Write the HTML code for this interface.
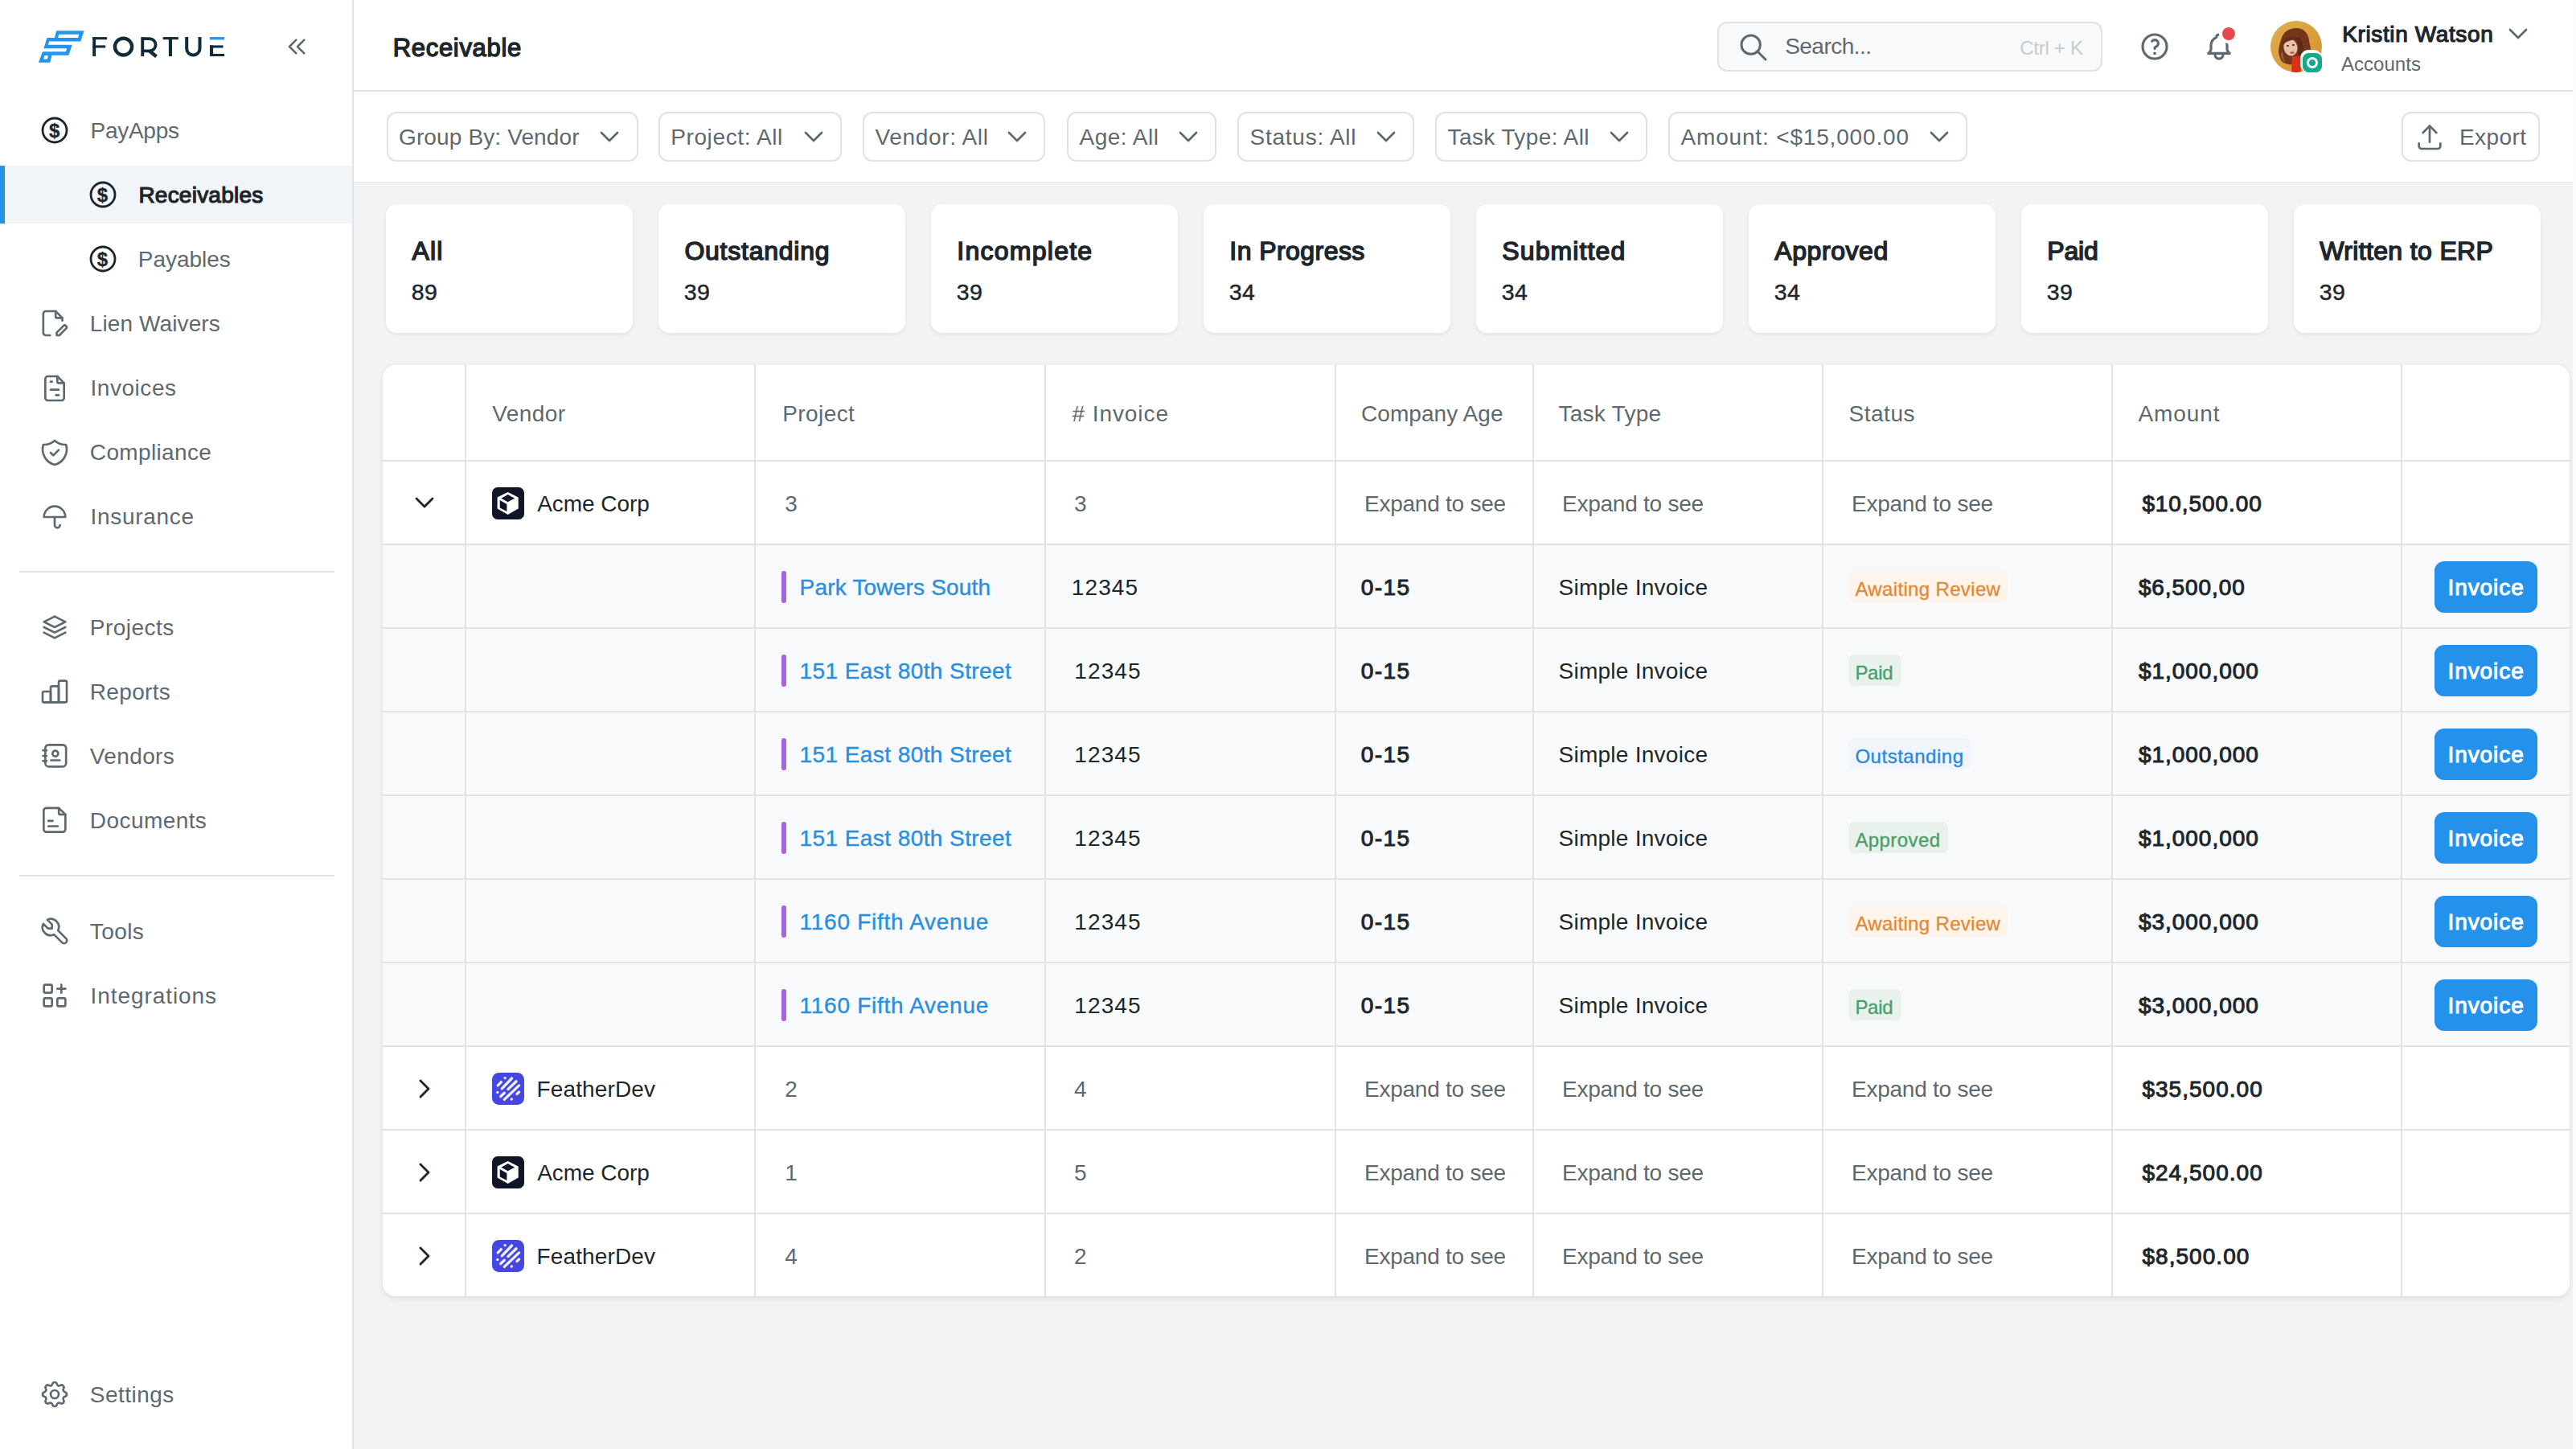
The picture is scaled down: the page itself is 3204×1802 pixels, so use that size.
<!DOCTYPE html><html><head><meta charset="utf-8"><style>
html,body{margin:0;padding:0;overflow:hidden;}
body{width:3204px;height:1802px;position:relative;overflow:hidden;background:#f1f3f5;font-family:"Liberation Sans", sans-serif;}
.t{position:absolute;white-space:nowrap;line-height:1;}
.r{position:absolute;box-sizing:border-box;}
.i{position:absolute;overflow:visible;}
</style></head><body>
<div class="r" style="left:0px;top:0px;width:438px;height:1802px;background:#ffffff;"></div>
<div class="r" style="left:438px;top:0px;width:2px;height:1802px;background:#e0e3e5;"></div>
<svg class="i" style="left:44px;top:34px;width:66px;height:48px" viewBox="0 0 66 48"><path fill="#2594ef" fill-rule="evenodd" d="M26.18 4.14 L60.64 4.14 L56.33 17.56 L17.23 17.56 L15.90 21.87 L45.73 21.87 L41.42 34.79 L20.54 34.79 L18.22 43.74 L3.98 43.74 L8.95 30.15 L37.96 30.15 L39.26 26.18 L10.27 26.18 L14.58 12.92 L23.86 12.92 Z M29.16 8.78 L54.34 8.78 L53.02 13.09 L28.16 13.09 Z M11.27 35.12 L15.90 35.12 L14.91 39.43 L10.27 39.43 Z"/></svg>
<svg class="i" style="left:0;top:0;width:300px;height:100px" viewBox="0 0 300 100"><g fill="#112b3b"><rect x="115.2" y="46.1" width="3.9" height="23.9"/><rect x="115.2" y="46.1" width="17.9" height="3.1"/><rect x="115.2" y="56.4" width="16" height="3.1"/><rect x="175.3" y="46.1" width="3.9" height="23.9"/><rect x="202.6" y="46.1" width="19.2" height="3.1"/><rect x="209.9" y="46.1" width="4.1" height="23.9"/><rect x="261" y="56.4" width="16.5" height="3.1"/><rect x="261" y="66.9" width="18.1" height="3.1"/><rect x="261" y="56.4" width="4.1" height="13.6"/></g><g fill="none" stroke="#112b3b" stroke-width="4"><ellipse cx="153.5" cy="58.1" rx="10.6" ry="10.4" stroke-width="4.4"/><path d="M177.2 48.1 H186 a7.6 7.6 0 0 1 0 15.2 H177.2" stroke-width="3.8"/><path d="M185.5 63 L194.5 70.2" stroke-width="4.4"/><path d="M232.2 46.1 V60.4 a8.15 8.15 0 0 0 16.3 0 V46.1"/></g><rect x="261" y="46.1" width="18.1" height="3.3" fill="#2594ef"/></svg>
<svg class="i" style="left:350.4px;top:38.3px;width:40px;height:40px;" viewBox="0 0 24 24" fill="none" stroke="#5e696f" stroke-width="1.5" stroke-linecap="round" stroke-linejoin="round"><path d="M11 7l-5 5l5 5"/><path d="M17 7l-5 5l5 5"/></svg>
<div class="r" style="left:0px;top:206px;width:438px;height:72px;background:#f1f5fa;"></div>
<div class="r" style="left:0px;top:206px;width:6px;height:72px;background:#2491ea;"></div>
<svg class="i" style="left:48.2px;top:141.8px;width:40px;height:40px;" viewBox="0 0 24 24" fill="none" stroke="#1d262c" stroke-width="1.7" stroke-linecap="round" stroke-linejoin="round"><circle cx="12" cy="12" r="9"/></svg>
<div class="t" style="left:60.9px;top:150.6px;font-size:24px;color:#1d262c;font-weight:700;-webkit-text-stroke:0.3px #1d262c;">$</div>
<div class="t" style="left:112.5px;top:148.8px;font-size:28px;color:#5e696f;letter-spacing:-0.27px;">PayApps</div>
<svg class="i" style="left:108.1px;top:221.8px;width:40px;height:40px;" viewBox="0 0 24 24" fill="none" stroke="#1d262c" stroke-width="1.7" stroke-linecap="round" stroke-linejoin="round"><circle cx="12" cy="12" r="9"/></svg>
<div class="t" style="left:120.8px;top:230.6px;font-size:24px;color:#1d262c;font-weight:700;-webkit-text-stroke:0.3px #1d262c;">$</div>
<div class="t" style="left:172.4px;top:228.8px;font-size:28px;color:#1d262c;letter-spacing:0.23px;-webkit-text-stroke:1.2px #1d262c;">Receivables</div>
<svg class="i" style="left:108.1px;top:301.7px;width:40px;height:40px;" viewBox="0 0 24 24" fill="none" stroke="#1d262c" stroke-width="1.7" stroke-linecap="round" stroke-linejoin="round"><circle cx="12" cy="12" r="9"/></svg>
<div class="t" style="left:120.8px;top:310.5px;font-size:24px;color:#1d262c;font-weight:700;-webkit-text-stroke:0.3px #1d262c;">$</div>
<div class="t" style="left:171.8px;top:308.5px;font-size:28px;color:#5e696f;letter-spacing:-0.03px;">Payables</div>
<svg class="i" style="left:48.0px;top:381.5px;width:40px;height:40px;" viewBox="0 0 24 24" fill="none" stroke="#5e696f" stroke-width="1.6" stroke-linecap="round" stroke-linejoin="round"><path d="M12.7 3v4a1 1 0 0 0 1 1h4"/><path d="M8.6 21h-3.1a2 2 0 0 1 -2 -2v-14a2 2 0 0 1 2 -2h7.2l5 5v2"/><path d="M13.5 21v-2l5 -5a1.414 1.414 0 0 1 2 2l-5 5h-2z"/></svg>
<div class="t" style="left:111.8px;top:389.3px;font-size:28px;color:#5e696f;letter-spacing:0.11px;">Lien Waivers</div>
<svg class="i" style="left:48.0px;top:462.5px;width:40px;height:40px;" viewBox="0 0 24 24" fill="none" stroke="#5e696f" stroke-width="1.6" stroke-linecap="round" stroke-linejoin="round"><path d="M14 3v4a1 1 0 0 0 1 1h4"/><path d="M17 21h-10a2 2 0 0 1 -2 -2v-14a2 2 0 0 1 2 -2h7l5 5v11a2 2 0 0 1 -2 2z"/><path d="M9 7l1 0"/><path d="M9 13l6 0"/><path d="M13 17l2 0"/></svg>
<div class="t" style="left:112.5px;top:469.3px;font-size:28px;color:#5e696f;letter-spacing:0.54px;">Invoices</div>
<svg class="i" style="left:48.0px;top:542.5px;width:40px;height:40px;" viewBox="0 0 24 24" fill="none" stroke="#5e696f" stroke-width="1.6" stroke-linecap="round" stroke-linejoin="round"><path d="M12 3a12 12 0 0 0 8.5 3a12 12 0 0 1 -8.5 15a12 12 0 0 1 -8.5 -15a12 12 0 0 0 8.5 -3"/><path d="M9 12l2 2l4 -4"/></svg>
<div class="t" style="left:111.8px;top:549.3px;font-size:28px;color:#5e696f;letter-spacing:0.36px;">Compliance</div>
<svg class="i" style="left:48.0px;top:622.5px;width:40px;height:40px;" viewBox="0 0 24 24" fill="none" stroke="#5e696f" stroke-width="1.6" stroke-linecap="round" stroke-linejoin="round"><path d="M4 12a8 8 0 0 1 16 0z"/><path d="M12 12v6a2 2 0 0 0 4 0"/></svg>
<div class="t" style="left:112.5px;top:629.3px;font-size:28px;color:#5e696f;letter-spacing:0.69px;">Insurance</div>
<svg class="i" style="left:48.0px;top:760.0px;width:40px;height:40px;" viewBox="0 0 24 24" fill="none" stroke="#5e696f" stroke-width="1.6" stroke-linecap="round" stroke-linejoin="round"><path d="M12 4l-8 4l8 4l8 -4l-8 -4"/><path d="M4 12l8 4l8 -4"/><path d="M4 16l8 4l8 -4"/></svg>
<div class="t" style="left:111.8px;top:766.8px;font-size:28px;color:#5e696f;letter-spacing:0.49px;">Projects</div>
<svg class="i" style="left:48.0px;top:840.0px;width:40px;height:40px;" viewBox="0 0 24 24" fill="none" stroke="#5e696f" stroke-width="1.6" stroke-linecap="round" stroke-linejoin="round"><path d="M3 13a1 1 0 0 1 1 -1h4a1 1 0 0 1 1 1v6a1 1 0 0 1 -1 1h-4a1 1 0 0 1 -1 -1z"/><path d="M9 9a1 1 0 0 1 1 -1h4a1 1 0 0 1 1 1v10a1 1 0 0 1 -1 1h-4a1 1 0 0 1 -1 -1z"/><path d="M15 5a1 1 0 0 1 1 -1h4a1 1 0 0 1 1 1v14a1 1 0 0 1 -1 1h-4a1 1 0 0 1 -1 -1z"/><path d="M4 20l14 0"/></svg>
<div class="t" style="left:111.8px;top:846.8px;font-size:28px;color:#5e696f;letter-spacing:0.33px;">Reports</div>
<svg class="i" style="left:48.0px;top:920.0px;width:40px;height:40px;" viewBox="0 0 24 24" fill="none" stroke="#5e696f" stroke-width="1.6" stroke-linecap="round" stroke-linejoin="round"><path d="M7.5 3.8h10.5a2.5 2.5 0 0 1 2.5 2.5v11.2a2.5 2.5 0 0 1 -2.5 2.5h-10.5a2.5 2.5 0 0 1 -2.5 -2.5v-11.2a2.5 2.5 0 0 1 2.5 -2.5z"/><path d="M9.3 15.3h6.5"/><circle cx="12.5" cy="10.3" r="2.1"/><path d="M3.3 7.9h2.6"/><path d="M3.3 12h2.6"/><path d="M3.3 15.8h2.6"/></svg>
<div class="t" style="left:111.8px;top:926.8px;font-size:28px;color:#5e696f;letter-spacing:0.38px;">Vendors</div>
<svg class="i" style="left:48.0px;top:1000.0px;width:40px;height:40px;" viewBox="0 0 24 24" fill="none" stroke="#5e696f" stroke-width="1.6" stroke-linecap="round" stroke-linejoin="round"><path d="M15.1 3v3.7a1 1 0 0 0 1 1h3.9"/><path d="M18 20.8h-12.2a2 2 0 0 1 -2 -2v-13.9a2 2 0 0 1 2 -2h9.3l4.9 4.8v11.1a2 2 0 0 1 -2 2z"/><path d="M7.3 16.5h7"/><path d="M7.3 12.5h3.2"/></svg>
<div class="t" style="left:111.8px;top:1006.8px;font-size:28px;color:#5e696f;letter-spacing:0.43px;">Documents</div>
<svg class="i" style="left:48.0px;top:1137.5px;width:40px;height:40px;" viewBox="0 0 24 24" fill="none" stroke="#5e696f" stroke-width="1.6" stroke-linecap="round" stroke-linejoin="round"><path d="M7 10h3v-3l-3.5 -3.5a6 6 0 0 1 8 8l6 6a2 2 0 0 1 -3 3l-6 -6a6 6 0 0 1 -8 -8l3.5 3.5"/></svg>
<div class="t" style="left:111.8px;top:1145.3px;font-size:28px;color:#5e696f;letter-spacing:0.4px;">Tools</div>
<svg class="i" style="left:48.0px;top:1217.5px;width:40px;height:40px;" viewBox="0 0 24 24" fill="none" stroke="#5e696f" stroke-width="1.6" stroke-linecap="round" stroke-linejoin="round"><path d="M5 4h4a1 1 0 0 1 1 1v4a1 1 0 0 1 -1 1h-4a1 1 0 0 1 -1 -1v-4a1 1 0 0 1 1 -1z"/><path d="M5 14h4a1 1 0 0 1 1 1v4a1 1 0 0 1 -1 1h-4a1 1 0 0 1 -1 -1v-4a1 1 0 0 1 1 -1z"/><path d="M15 14h4a1 1 0 0 1 1 1v4a1 1 0 0 1 -1 1h-4a1 1 0 0 1 -1 -1v-4a1 1 0 0 1 1 -1z"/><path d="M14 7l6 0"/><path d="M17 4l0 6"/></svg>
<div class="t" style="left:112.5px;top:1225.3px;font-size:28px;color:#5e696f;letter-spacing:0.93px;">Integrations</div>
<svg class="i" style="left:48.0px;top:1714.0px;width:40px;height:40px;" viewBox="0 0 24 24" fill="none" stroke="#5e696f" stroke-width="1.6" stroke-linecap="round" stroke-linejoin="round"><path d="M10.325 4.317c.426 -1.756 2.924 -1.756 3.35 0a1.724 1.724 0 0 0 2.573 1.066c1.543 -.94 3.31 .826 2.37 2.37a1.724 1.724 0 0 0 1.065 2.572c1.756 .426 1.756 2.924 0 3.35a1.724 1.724 0 0 0 -1.066 2.573c.94 1.543 -.826 3.31 -2.37 2.37a1.724 1.724 0 0 0 -2.572 1.065c-.426 1.756 -2.924 1.756 -3.35 0a1.724 1.724 0 0 0 -2.573 -1.066c-1.543 .94 -3.31 -.826 -2.37 -2.37a1.724 1.724 0 0 0 -1.065 -2.572c-1.756 -.426 -1.756 -2.924 0 -3.35a1.724 1.724 0 0 0 1.066 -2.573c-.94 -1.543 .826 -3.31 2.37 -2.37c1 .608 2.296 .07 2.572 -1.065z"/><path d="M9 12a3 3 0 1 0 6 0a3 3 0 0 0 -6 0"/></svg>
<div class="t" style="left:111.8px;top:1720.8px;font-size:28px;color:#5e696f;letter-spacing:0.47px;">Settings</div>
<div class="r" style="left:24px;top:710px;width:392px;height:2px;background:#e0e3e5;"></div>
<div class="r" style="left:24px;top:1088px;width:392px;height:2px;background:#e0e3e5;"></div>
<div class="r" style="left:440px;top:0px;width:2764px;height:112px;background:#ffffff;"></div>
<div class="r" style="left:440px;top:112px;width:2764px;height:2px;background:#e0e3e5;"></div>
<div class="t" style="left:488.7px;top:44.1px;font-size:31px;color:#1d262c;letter-spacing:0.69px;-webkit-text-stroke:1.4px #1d262c;">Receivable</div>
<div class="r" style="left:2136px;top:27px;width:479px;height:62px;background:#f8f9fa;border:2px solid #e0e3e5;border-radius:12px;"></div>
<svg class="i" style="left:2160.8px;top:38.9px;width:40px;height:40px" viewBox="0 0 24 24" fill="none" stroke="#5e696f" stroke-width="1.8" stroke-linecap="round"><circle cx="10" cy="10" r="7"/><path d="M21 21l-6 -6"/></svg>
<div class="t" style="left:2220.2px;top:44.4px;font-size:28px;color:#5e696f;letter-spacing:-0.54px;">Search...</div>
<div class="t" style="left:2512.3px;top:47.8px;font-size:24px;color:#c6cbd0;letter-spacing:-0.29px;">Ctrl + K</div>
<svg class="i" style="left:2660.0px;top:37.8px;width:40px;height:40px;" viewBox="0 0 24 24" fill="none" stroke="#5e696f" stroke-width="1.9" stroke-linecap="round" stroke-linejoin="round"><circle cx="12" cy="12" r="9"/><path d="M12 17l0 .01" stroke-width="2.3"/><path d="M12 13.5a1.5 1.5 0 0 1 1 -1.5a2.6 2.6 0 1 0 -3 -4"/></svg>
<svg class="i" style="left:2740.0px;top:38.0px;width:40px;height:40px;" viewBox="0 0 24 24" fill="none" stroke="#5e696f" stroke-width="1.9" stroke-linecap="round" stroke-linejoin="round"><path d="M10 5a2 2 0 1 1 4 0a7 7 0 0 1 4 6v3a4 4 0 0 0 2 3h-16a4 4 0 0 0 2 -3v-3a7 7 0 0 1 4 -6"/><path d="M9 17v1a3 3 0 0 0 6 0v-1"/></svg>
<div class="r" style="left:2760px;top:30px;width:24px;height:24px;border-radius:50%;background:#fff;"></div>
<div class="r" style="left:2764px;top:34px;width:16px;height:16px;border-radius:50%;background:#e5484d;"></div>
<svg class="i" style="left:2824px;top:26px;width:64px;height:64px" viewBox="0 0 64 64"><defs><clipPath id="av"><circle cx="32" cy="32" r="32"/></clipPath><linearGradient id="ag" x1="0" y1="0" x2="1" y2="1"><stop offset="0" stop-color="#deb04e"/><stop offset="1" stop-color="#d58f2e"/></linearGradient></defs><g clip-path="url(#av)"><rect width="64" height="64" fill="url(#ag)"/><path d="M12 46 C9 40 10 32 13 24 C15 14 23 9 32 9 C41 9 47 15 48 24 C49 31 51 36 50 41 C48 45 44 46 40 47 L36 50 C33 53 28 55 22 54 C17 53 13 51 12 46 Z" fill="#74351b"/><path d="M13 40 C12 44 14 49 19 52 C16 47 15 43 16 38 Z" fill="#9a5a34"/><path d="M44 36 C47 38 49 40 48 43 C46 41 44 40 43 39 Z" fill="#9a5a34"/><ellipse cx="25" cy="33" rx="8.5" ry="10.5" fill="#e8c3ac" transform="rotate(-12 25 33)"/><path d="M15 28 C16 20 25 17 33 21 C34 24 30 23 26 24 C21 25 18 27 15 30 Z" fill="#6a2e17"/><path d="M31 22 C35 26 36 34 34 42 L39 44 C42 36 41 26 36 20 Z" fill="#5e2815"/><ellipse cx="21.5" cy="31" rx="1.6" ry="0.9" fill="#4a2a20"/><ellipse cx="28.5" cy="30" rx="1.6" ry="0.9" fill="#4a2a20"/><ellipse cx="27" cy="39.5" rx="2.8" ry="1.3" fill="#d8473f"/><path d="M27 44 L37 44 L38 64 L26 64 Z" fill="#dc2f1a"/></g></svg>
<div class="r" style="left:2860.5px;top:62.3px;width:27.6px;height:27.6px;border-radius:10px;background:#fff;"></div>
<div class="r" style="left:2864.2px;top:66px;width:23.6px;height:23.8px;border-radius:7.5px;background:#17a98b;"></div>
<div class="r" style="left:2869px;top:71px;width:14px;height:14px;border-radius:50%;border:3px solid #fff;"></div>
<div class="t" style="left:2913.2px;top:28.9px;font-size:28px;color:#1d262c;letter-spacing:0.62px;-webkit-text-stroke:1.2px #1d262c;">Kristin Watson</div>
<div class="t" style="left:2911.9px;top:68.0px;font-size:24px;color:#5e696f;letter-spacing:0.04px;">Accounts</div>
<svg class="i" style="left:3112.0px;top:21.7px;width:40px;height:40px;" viewBox="0 0 24 24" fill="none" stroke="#5e696f" stroke-width="1.6" stroke-linecap="round" stroke-linejoin="round"><path d="M6 9l6 6l6 -6"/></svg>
<div class="r" style="left:440px;top:114px;width:2764px;height:112px;background:#ffffff;"></div>
<div class="r" style="left:480.5px;top:138.5px;width:313px;height:62.5px;background:#ffffff;border:2px solid #e0e3e5;border-radius:12px;"></div>
<div class="t" style="left:496.0px;top:157.4px;font-size:28px;color:#5e696f;letter-spacing:0.13px;">Group By: Vendor</div>
<svg class="i" style="left:738.0px;top:149.8px;width:40px;height:40px;" viewBox="0 0 24 24" fill="none" stroke="#5e696f" stroke-width="1.6" stroke-linecap="round" stroke-linejoin="round"><path d="M6 9l6 6l6 -6"/></svg>
<div class="r" style="left:818.7px;top:138.5px;width:228.5px;height:62.5px;background:#ffffff;border:2px solid #e0e3e5;border-radius:12px;"></div>
<div class="t" style="left:834.2px;top:157.4px;font-size:28px;color:#5e696f;letter-spacing:0.62px;">Project: All</div>
<svg class="i" style="left:991.7px;top:149.8px;width:40px;height:40px;" viewBox="0 0 24 24" fill="none" stroke="#5e696f" stroke-width="1.6" stroke-linecap="round" stroke-linejoin="round"><path d="M6 9l6 6l6 -6"/></svg>
<div class="r" style="left:1073px;top:138.5px;width:227px;height:62.5px;background:#ffffff;border:2px solid #e0e3e5;border-radius:12px;"></div>
<div class="t" style="left:1088.5px;top:157.4px;font-size:28px;color:#5e696f;letter-spacing:0.66px;">Vendor: All</div>
<svg class="i" style="left:1244.5px;top:149.8px;width:40px;height:40px;" viewBox="0 0 24 24" fill="none" stroke="#5e696f" stroke-width="1.6" stroke-linecap="round" stroke-linejoin="round"><path d="M6 9l6 6l6 -6"/></svg>
<div class="r" style="left:1327px;top:138.5px;width:186px;height:62.5px;background:#ffffff;border:2px solid #e0e3e5;border-radius:12px;"></div>
<div class="t" style="left:1342.5px;top:157.4px;font-size:28px;color:#5e696f;letter-spacing:0.5px;">Age: All</div>
<svg class="i" style="left:1457.5px;top:149.8px;width:40px;height:40px;" viewBox="0 0 24 24" fill="none" stroke="#5e696f" stroke-width="1.6" stroke-linecap="round" stroke-linejoin="round"><path d="M6 9l6 6l6 -6"/></svg>
<div class="r" style="left:1539px;top:138.5px;width:220px;height:62.5px;background:#ffffff;border:2px solid #e0e3e5;border-radius:12px;"></div>
<div class="t" style="left:1554.5px;top:157.4px;font-size:28px;color:#5e696f;letter-spacing:0.75px;">Status: All</div>
<svg class="i" style="left:1703.5px;top:149.8px;width:40px;height:40px;" viewBox="0 0 24 24" fill="none" stroke="#5e696f" stroke-width="1.6" stroke-linecap="round" stroke-linejoin="round"><path d="M6 9l6 6l6 -6"/></svg>
<div class="r" style="left:1785px;top:138.5px;width:264px;height:62.5px;background:#ffffff;border:2px solid #e0e3e5;border-radius:12px;"></div>
<div class="t" style="left:1800.5px;top:157.4px;font-size:28px;color:#5e696f;letter-spacing:0.41px;">Task Type: All</div>
<svg class="i" style="left:1993.5px;top:149.8px;width:40px;height:40px;" viewBox="0 0 24 24" fill="none" stroke="#5e696f" stroke-width="1.6" stroke-linecap="round" stroke-linejoin="round"><path d="M6 9l6 6l6 -6"/></svg>
<div class="r" style="left:2075px;top:138.5px;width:372px;height:62.5px;background:#ffffff;border:2px solid #e0e3e5;border-radius:12px;"></div>
<div class="t" style="left:2090.5px;top:157.4px;font-size:28px;color:#5e696f;letter-spacing:0.83px;">Amount: &lt;$15,000.00</div>
<svg class="i" style="left:2391.5px;top:149.8px;width:40px;height:40px;" viewBox="0 0 24 24" fill="none" stroke="#5e696f" stroke-width="1.6" stroke-linecap="round" stroke-linejoin="round"><path d="M6 9l6 6l6 -6"/></svg>
<div class="r" style="left:2987px;top:138.5px;width:172px;height:62.5px;background:#ffffff;border:2px solid #e0e3e5;border-radius:12px;"></div>
<svg class="i" style="left:3001.5px;top:149.5px;width:40px;height:40px;" viewBox="0 0 24 24" fill="none" stroke="#5e696f" stroke-width="1.6" stroke-linecap="round" stroke-linejoin="round"><path d="M4 17v2a2 2 0 0 0 2 2h12a2 2 0 0 0 2 -2v-2"/><path d="M7 9l5 -5l5 5"/><path d="M12 4l0 12"/></svg>
<div class="t" style="left:3059.0px;top:157.4px;font-size:28px;color:#5e696f;letter-spacing:0.42px;">Export</div>
<div class="r" style="left:480px;top:254px;width:307px;height:160px;background:#ffffff;border-radius:14px;box-shadow:0 2px 5px rgba(16,24,40,0.07);"></div>
<div class="t" style="left:512.4px;top:296.2px;font-size:32px;color:#1d262c;letter-spacing:1.25px;-webkit-text-stroke:1.5px #1d262c;">All</div>
<div class="t" style="left:511.8px;top:348.7px;font-size:28.5px;color:#1d262c;letter-spacing:0.35px;-webkit-text-stroke:0.45px #1d262c;">89</div>
<div class="r" style="left:819px;top:254px;width:307px;height:160px;background:#ffffff;border-radius:14px;box-shadow:0 2px 5px rgba(16,24,40,0.07);"></div>
<div class="t" style="left:851.4px;top:296.2px;font-size:32px;color:#1d262c;letter-spacing:0.76px;-webkit-text-stroke:1.5px #1d262c;">Outstanding</div>
<div class="t" style="left:850.8px;top:348.7px;font-size:28.5px;color:#1d262c;letter-spacing:0.35px;-webkit-text-stroke:0.45px #1d262c;">39</div>
<div class="r" style="left:1158px;top:254px;width:307px;height:160px;background:#ffffff;border-radius:14px;box-shadow:0 2px 5px rgba(16,24,40,0.07);"></div>
<div class="t" style="left:1190.3px;top:296.2px;font-size:32px;color:#1d262c;letter-spacing:1.26px;-webkit-text-stroke:1.5px #1d262c;">Incomplete</div>
<div class="t" style="left:1189.8px;top:348.7px;font-size:28.5px;color:#1d262c;letter-spacing:0.35px;-webkit-text-stroke:0.45px #1d262c;">39</div>
<div class="r" style="left:1497px;top:254px;width:307px;height:160px;background:#ffffff;border-radius:14px;box-shadow:0 2px 5px rgba(16,24,40,0.07);"></div>
<div class="t" style="left:1529.3px;top:296.2px;font-size:32px;color:#1d262c;letter-spacing:0.44px;-webkit-text-stroke:1.5px #1d262c;">In Progress</div>
<div class="t" style="left:1528.8px;top:348.7px;font-size:28.5px;color:#1d262c;letter-spacing:0.35px;-webkit-text-stroke:0.45px #1d262c;">34</div>
<div class="r" style="left:1836px;top:254px;width:307px;height:160px;background:#ffffff;border-radius:14px;box-shadow:0 2px 5px rgba(16,24,40,0.07);"></div>
<div class="t" style="left:1868.3px;top:296.2px;font-size:32px;color:#1d262c;letter-spacing:1.11px;-webkit-text-stroke:1.5px #1d262c;">Submitted</div>
<div class="t" style="left:1867.8px;top:348.7px;font-size:28.5px;color:#1d262c;letter-spacing:0.35px;-webkit-text-stroke:0.45px #1d262c;">34</div>
<div class="r" style="left:2175px;top:254px;width:307px;height:160px;background:#ffffff;border-radius:14px;box-shadow:0 2px 5px rgba(16,24,40,0.07);"></div>
<div class="t" style="left:2207.3px;top:296.2px;font-size:32px;color:#1d262c;letter-spacing:0.57px;-webkit-text-stroke:1.5px #1d262c;">Approved</div>
<div class="t" style="left:2206.8px;top:348.7px;font-size:28.5px;color:#1d262c;letter-spacing:0.35px;-webkit-text-stroke:0.45px #1d262c;">34</div>
<div class="r" style="left:2514px;top:254px;width:307px;height:160px;background:#ffffff;border-radius:14px;box-shadow:0 2px 5px rgba(16,24,40,0.07);"></div>
<div class="t" style="left:2546.3px;top:296.2px;font-size:32px;color:#1d262c;letter-spacing:-0.17px;-webkit-text-stroke:1.5px #1d262c;">Paid</div>
<div class="t" style="left:2545.8px;top:348.7px;font-size:28.5px;color:#1d262c;letter-spacing:0.35px;-webkit-text-stroke:0.45px #1d262c;">39</div>
<div class="r" style="left:2853px;top:254px;width:307px;height:160px;background:#ffffff;border-radius:14px;box-shadow:0 2px 5px rgba(16,24,40,0.07);"></div>
<div class="t" style="left:2885.3px;top:296.2px;font-size:32px;color:#1d262c;letter-spacing:0.35px;-webkit-text-stroke:1.5px #1d262c;">Written to ERP</div>
<div class="t" style="left:2884.8px;top:348.7px;font-size:28.5px;color:#1d262c;letter-spacing:0.35px;-webkit-text-stroke:0.45px #1d262c;">39</div>
<div class="r" style="left:476px;top:454px;width:2720px;height:1158px;background:#fff;border-radius:16px;box-shadow:0 3px 8px rgba(16,24,40,0.08), 0 0 2px rgba(16,24,40,0.05);overflow:hidden;">
<div class="r" style="left:0;top:224px;width:2720px;height:102px;background:#f8f9fa;"></div>
<div class="r" style="left:0;top:328px;width:2720px;height:102px;background:#f8f9fa;"></div>
<div class="r" style="left:0;top:432px;width:2720px;height:102px;background:#f8f9fa;"></div>
<div class="r" style="left:0;top:536px;width:2720px;height:102px;background:#f8f9fa;"></div>
<div class="r" style="left:0;top:640px;width:2720px;height:102px;background:#f8f9fa;"></div>
<div class="r" style="left:0;top:744px;width:2720px;height:102px;background:#f8f9fa;"></div>
</div>
<div class="r" style="left:476px;top:572px;width:2720px;height:2px;background:#e0e3e5;"></div>
<div class="r" style="left:476px;top:676px;width:2720px;height:2px;background:#e0e3e5;"></div>
<div class="r" style="left:476px;top:780px;width:2720px;height:2px;background:#e0e3e5;"></div>
<div class="r" style="left:476px;top:884px;width:2720px;height:2px;background:#e0e3e5;"></div>
<div class="r" style="left:476px;top:988px;width:2720px;height:2px;background:#e0e3e5;"></div>
<div class="r" style="left:476px;top:1092px;width:2720px;height:2px;background:#e0e3e5;"></div>
<div class="r" style="left:476px;top:1196px;width:2720px;height:2px;background:#e0e3e5;"></div>
<div class="r" style="left:476px;top:1300px;width:2720px;height:2px;background:#e0e3e5;"></div>
<div class="r" style="left:476px;top:1404px;width:2720px;height:2px;background:#e0e3e5;"></div>
<div class="r" style="left:476px;top:1508px;width:2720px;height:2px;background:#e0e3e5;"></div>
<div class="r" style="left:578px;top:454px;width:2px;height:1158px;background:#e0e3e5;"></div>
<div class="r" style="left:938px;top:454px;width:2px;height:1158px;background:#e0e3e5;"></div>
<div class="r" style="left:1299px;top:454px;width:2px;height:1158px;background:#e0e3e5;"></div>
<div class="r" style="left:1660px;top:454px;width:2px;height:1158px;background:#e0e3e5;"></div>
<div class="r" style="left:1906px;top:454px;width:2px;height:1158px;background:#e0e3e5;"></div>
<div class="r" style="left:2266px;top:454px;width:2px;height:1158px;background:#e0e3e5;"></div>
<div class="r" style="left:2626px;top:454px;width:2px;height:1158px;background:#e0e3e5;"></div>
<div class="r" style="left:2986px;top:454px;width:2px;height:1158px;background:#e0e3e5;"></div>
<div class="t" style="left:612.3px;top:500.8px;font-size:28px;color:#5e696f;letter-spacing:0.4px;">Vendor</div>
<div class="t" style="left:973.3px;top:500.8px;font-size:28px;color:#5e696f;letter-spacing:0.4px;">Project</div>
<div class="t" style="left:1333.5px;top:500.8px;font-size:28px;color:#5e696f;letter-spacing:0.93px;"># Invoice</div>
<div class="t" style="left:1693.0px;top:500.8px;font-size:28px;color:#5e696f;letter-spacing:0.06px;">Company Age</div>
<div class="t" style="left:1938.5px;top:500.8px;font-size:28px;color:#5e696f;letter-spacing:0.25px;">Task Type</div>
<div class="t" style="left:2299.5px;top:500.8px;font-size:28px;color:#5e696f;letter-spacing:0.52px;">Status</div>
<div class="t" style="left:2659.5px;top:500.8px;font-size:28px;color:#5e696f;letter-spacing:0.9px;">Amount</div>
<svg class="i" style="left:508.0px;top:605.0px;width:40px;height:40px;" viewBox="0 0 24 24" fill="none" stroke="#1d262c" stroke-width="1.7" stroke-linecap="round" stroke-linejoin="round"><path d="M6 9l6 6l6 -6"/></svg>
<svg class="i" style="left:612px;top:606px;width:40px;height:40px" viewBox="0 0 40 40"><rect width="40" height="40" rx="7" fill="#0f1726"/><path fill="#fff" fill-rule="evenodd" d="M19.66 6.0 L32.7 12.6 L32.7 26.5 L19.66 33.9 L6.6 26.5 L6.6 12.6 Z M11.4 13.7 L19.66 9.1 L28.1 13.7 L19.66 18.2 Z M9.7 16.1 L18.4 20.9 L18.4 30.0 L9.7 25.5 Z"/></svg>
<div class="t" style="left:668.2px;top:612.8px;font-size:28px;color:#1d262c;letter-spacing:-0.05px;">Acme Corp</div>
<div class="t" style="left:976.3px;top:612.8px;font-size:28px;color:#5e696f;">3</div>
<div class="t" style="left:1336.0px;top:612.8px;font-size:28px;color:#5e696f;">3</div>
<div class="t" style="left:1697.0px;top:612.8px;font-size:28px;color:#5e696f;letter-spacing:-0.25px;">Expand to see</div>
<div class="t" style="left:1943.0px;top:612.8px;font-size:28px;color:#5e696f;letter-spacing:-0.25px;">Expand to see</div>
<div class="t" style="left:2303.0px;top:612.8px;font-size:28px;color:#5e696f;letter-spacing:-0.25px;">Expand to see</div>
<div class="t" style="left:2664.4px;top:612.8px;font-size:28px;color:#1d262c;letter-spacing:0.91px;-webkit-text-stroke:1.0px #1d262c;">$10,500.00</div>
<div class="r" style="left:972px;top:709.5px;width:6px;height:40px;border-radius:3px;background:#a463e6;"></div>
<div class="t" style="left:994.6px;top:716.8px;font-size:28px;color:#2b8fe0;letter-spacing:0.19px;-webkit-text-stroke:0.4px #2b8fe0;">Park Towers South</div>
<div class="t" style="left:1332.7px;top:716.8px;font-size:28px;color:#1d262c;letter-spacing:1.15px;">12345</div>
<div class="t" style="left:1692.7px;top:716.8px;font-size:28px;color:#1d262c;letter-spacing:1.47px;-webkit-text-stroke:1.0px #1d262c;">0-15</div>
<div class="t" style="left:1938.5px;top:716.8px;font-size:28px;color:#1d262c;letter-spacing:0.26px;">Simple Invoice</div>
<div class="r" style="left:2299.4px;top:710px;width:197.4px;height:39px;background:#fdf4eb;border-radius:8px;"></div>
<div class="t" style="left:2307.4px;top:720.9px;font-size:24px;color:#e08b36;letter-spacing:0.35px;-webkit-text-stroke:0.35px #e08b36;">Awaiting Review</div>
<div class="t" style="left:2659.9px;top:716.8px;font-size:28px;color:#1d262c;letter-spacing:0.91px;-webkit-text-stroke:1.0px #1d262c;">$6,500,00</div>
<div class="r" style="left:3028px;top:698px;width:128px;height:64px;background:#2491ea;border-radius:12px;"></div>
<div class="t" style="left:3044.5px;top:716.8px;font-size:28px;color:#ffffff;letter-spacing:0.92px;-webkit-text-stroke:1.0px #ffffff;">Invoice</div>
<div class="r" style="left:972px;top:813.5px;width:6px;height:40px;border-radius:3px;background:#a463e6;"></div>
<div class="t" style="left:994.6px;top:820.8px;font-size:28px;color:#2b8fe0;letter-spacing:0.42px;-webkit-text-stroke:0.4px #2b8fe0;">151 East 80th Street</div>
<div class="t" style="left:1336.2px;top:820.8px;font-size:28px;color:#1d262c;letter-spacing:1.15px;">12345</div>
<div class="t" style="left:1692.7px;top:820.8px;font-size:28px;color:#1d262c;letter-spacing:1.47px;-webkit-text-stroke:1.0px #1d262c;">0-15</div>
<div class="t" style="left:1938.5px;top:820.8px;font-size:28px;color:#1d262c;letter-spacing:0.26px;">Simple Invoice</div>
<div class="r" style="left:2299.4px;top:814px;width:65.7px;height:39px;background:#e8f1eb;border-radius:8px;"></div>
<div class="t" style="left:2307.4px;top:824.9px;font-size:24px;color:#4a9e6b;letter-spacing:-0.28px;-webkit-text-stroke:0.35px #4a9e6b;">Paid</div>
<div class="t" style="left:2659.9px;top:820.8px;font-size:28px;color:#1d262c;letter-spacing:0.98px;-webkit-text-stroke:1.0px #1d262c;">$1,000,000</div>
<div class="r" style="left:3028px;top:802px;width:128px;height:64px;background:#2491ea;border-radius:12px;"></div>
<div class="t" style="left:3044.5px;top:820.8px;font-size:28px;color:#ffffff;letter-spacing:0.92px;-webkit-text-stroke:1.0px #ffffff;">Invoice</div>
<div class="r" style="left:972px;top:917.5px;width:6px;height:40px;border-radius:3px;background:#a463e6;"></div>
<div class="t" style="left:994.6px;top:924.8px;font-size:28px;color:#2b8fe0;letter-spacing:0.42px;-webkit-text-stroke:0.4px #2b8fe0;">151 East 80th Street</div>
<div class="t" style="left:1336.2px;top:924.8px;font-size:28px;color:#1d262c;letter-spacing:1.15px;">12345</div>
<div class="t" style="left:1692.7px;top:924.8px;font-size:28px;color:#1d262c;letter-spacing:1.47px;-webkit-text-stroke:1.0px #1d262c;">0-15</div>
<div class="t" style="left:1938.5px;top:924.8px;font-size:28px;color:#1d262c;letter-spacing:0.26px;">Simple Invoice</div>
<div class="r" style="left:2299.4px;top:918px;width:152px;height:39px;background:#f0f5fc;border-radius:8px;"></div>
<div class="t" style="left:2307.4px;top:928.9px;font-size:24px;color:#2a88da;letter-spacing:0.52px;-webkit-text-stroke:0.35px #2a88da;">Outstanding</div>
<div class="t" style="left:2659.9px;top:924.8px;font-size:28px;color:#1d262c;letter-spacing:0.98px;-webkit-text-stroke:1.0px #1d262c;">$1,000,000</div>
<div class="r" style="left:3028px;top:906px;width:128px;height:64px;background:#2491ea;border-radius:12px;"></div>
<div class="t" style="left:3044.5px;top:924.8px;font-size:28px;color:#ffffff;letter-spacing:0.92px;-webkit-text-stroke:1.0px #ffffff;">Invoice</div>
<div class="r" style="left:972px;top:1021.5px;width:6px;height:40px;border-radius:3px;background:#a463e6;"></div>
<div class="t" style="left:994.6px;top:1028.8px;font-size:28px;color:#2b8fe0;letter-spacing:0.42px;-webkit-text-stroke:0.4px #2b8fe0;">151 East 80th Street</div>
<div class="t" style="left:1336.2px;top:1028.8px;font-size:28px;color:#1d262c;letter-spacing:1.15px;">12345</div>
<div class="t" style="left:1692.7px;top:1028.8px;font-size:28px;color:#1d262c;letter-spacing:1.47px;-webkit-text-stroke:1.0px #1d262c;">0-15</div>
<div class="t" style="left:1938.5px;top:1028.8px;font-size:28px;color:#1d262c;letter-spacing:0.26px;">Simple Invoice</div>
<div class="r" style="left:2299.4px;top:1022px;width:124px;height:39px;background:#e8f1eb;border-radius:8px;"></div>
<div class="t" style="left:2307.4px;top:1032.9px;font-size:24px;color:#4a9e6b;letter-spacing:0.42px;-webkit-text-stroke:0.35px #4a9e6b;">Approved</div>
<div class="t" style="left:2659.9px;top:1028.8px;font-size:28px;color:#1d262c;letter-spacing:0.98px;-webkit-text-stroke:1.0px #1d262c;">$1,000,000</div>
<div class="r" style="left:3028px;top:1010px;width:128px;height:64px;background:#2491ea;border-radius:12px;"></div>
<div class="t" style="left:3044.5px;top:1028.8px;font-size:28px;color:#ffffff;letter-spacing:0.92px;-webkit-text-stroke:1.0px #ffffff;">Invoice</div>
<div class="r" style="left:972px;top:1125.5px;width:6px;height:40px;border-radius:3px;background:#a463e6;"></div>
<div class="t" style="left:994.6px;top:1132.8px;font-size:28px;color:#2b8fe0;letter-spacing:0.72px;-webkit-text-stroke:0.4px #2b8fe0;">1160 Fifth Avenue</div>
<div class="t" style="left:1336.2px;top:1132.8px;font-size:28px;color:#1d262c;letter-spacing:1.15px;">12345</div>
<div class="t" style="left:1692.7px;top:1132.8px;font-size:28px;color:#1d262c;letter-spacing:1.47px;-webkit-text-stroke:1.0px #1d262c;">0-15</div>
<div class="t" style="left:1938.5px;top:1132.8px;font-size:28px;color:#1d262c;letter-spacing:0.26px;">Simple Invoice</div>
<div class="r" style="left:2299.4px;top:1126px;width:197.4px;height:39px;background:#fdf4eb;border-radius:8px;"></div>
<div class="t" style="left:2307.4px;top:1136.9px;font-size:24px;color:#e08b36;letter-spacing:0.35px;-webkit-text-stroke:0.35px #e08b36;">Awaiting Review</div>
<div class="t" style="left:2659.9px;top:1132.8px;font-size:28px;color:#1d262c;letter-spacing:0.98px;-webkit-text-stroke:1.0px #1d262c;">$3,000,000</div>
<div class="r" style="left:3028px;top:1114px;width:128px;height:64px;background:#2491ea;border-radius:12px;"></div>
<div class="t" style="left:3044.5px;top:1132.8px;font-size:28px;color:#ffffff;letter-spacing:0.92px;-webkit-text-stroke:1.0px #ffffff;">Invoice</div>
<div class="r" style="left:972px;top:1229.5px;width:6px;height:40px;border-radius:3px;background:#a463e6;"></div>
<div class="t" style="left:994.6px;top:1236.8px;font-size:28px;color:#2b8fe0;letter-spacing:0.72px;-webkit-text-stroke:0.4px #2b8fe0;">1160 Fifth Avenue</div>
<div class="t" style="left:1336.2px;top:1236.8px;font-size:28px;color:#1d262c;letter-spacing:1.15px;">12345</div>
<div class="t" style="left:1692.7px;top:1236.8px;font-size:28px;color:#1d262c;letter-spacing:1.47px;-webkit-text-stroke:1.0px #1d262c;">0-15</div>
<div class="t" style="left:1938.5px;top:1236.8px;font-size:28px;color:#1d262c;letter-spacing:0.26px;">Simple Invoice</div>
<div class="r" style="left:2299.4px;top:1230px;width:65.7px;height:39px;background:#e8f1eb;border-radius:8px;"></div>
<div class="t" style="left:2307.4px;top:1240.9px;font-size:24px;color:#4a9e6b;letter-spacing:-0.28px;-webkit-text-stroke:0.35px #4a9e6b;">Paid</div>
<div class="t" style="left:2659.9px;top:1236.8px;font-size:28px;color:#1d262c;letter-spacing:0.98px;-webkit-text-stroke:1.0px #1d262c;">$3,000,000</div>
<div class="r" style="left:3028px;top:1218px;width:128px;height:64px;background:#2491ea;border-radius:12px;"></div>
<div class="t" style="left:3044.5px;top:1236.8px;font-size:28px;color:#ffffff;letter-spacing:0.92px;-webkit-text-stroke:1.0px #ffffff;">Invoice</div>
<svg class="i" style="left:507.8px;top:1333.8px;width:40px;height:40px;" viewBox="0 0 24 24" fill="none" stroke="#1d262c" stroke-width="1.7" stroke-linecap="round" stroke-linejoin="round"><path d="M9 6l6 6l-6 6"/></svg>
<svg class="i" style="left:612px;top:1334px;width:40px;height:40px" viewBox="0 0 40 40"><rect width="40" height="40" rx="8.5" fill="#4646e1"/><g stroke="#eef0ff" stroke-width="3.3" stroke-linecap="round"><path d="M7.2 15.9 L11.4 11.6"/><path d="M12.2 19.8 L24.6 7"/><path d="M20 20.5 L30.1 10.8"/><path d="M15.3 33.4 L33.6 15.9"/><path d="M10.7 29.5 L15.3 25.2"/><path d="M30.9 26.4 L33.6 24"/></g><g fill="#eef0ff"><circle cx="16.1" cy="6.6" r="1.7"/><circle cx="6.8" cy="24.4" r="1.7"/><circle cx="24.3" cy="33" r="1.7"/></g></svg>
<div class="t" style="left:667.5px;top:1340.8px;font-size:28px;color:#1d262c;letter-spacing:0.13px;">FeatherDev</div>
<div class="t" style="left:976.3px;top:1340.8px;font-size:28px;color:#5e696f;">2</div>
<div class="t" style="left:1336.0px;top:1340.8px;font-size:28px;color:#5e696f;">4</div>
<div class="t" style="left:1697.0px;top:1340.8px;font-size:28px;color:#5e696f;letter-spacing:-0.25px;">Expand to see</div>
<div class="t" style="left:1943.0px;top:1340.8px;font-size:28px;color:#5e696f;letter-spacing:-0.25px;">Expand to see</div>
<div class="t" style="left:2303.0px;top:1340.8px;font-size:28px;color:#5e696f;letter-spacing:-0.25px;">Expand to see</div>
<div class="t" style="left:2664.4px;top:1340.8px;font-size:28px;color:#1d262c;letter-spacing:1.03px;-webkit-text-stroke:1.0px #1d262c;">$35,500.00</div>
<svg class="i" style="left:507.8px;top:1437.8px;width:40px;height:40px;" viewBox="0 0 24 24" fill="none" stroke="#1d262c" stroke-width="1.7" stroke-linecap="round" stroke-linejoin="round"><path d="M9 6l6 6l-6 6"/></svg>
<svg class="i" style="left:612px;top:1438px;width:40px;height:40px" viewBox="0 0 40 40"><rect width="40" height="40" rx="7" fill="#0f1726"/><path fill="#fff" fill-rule="evenodd" d="M19.66 6.0 L32.7 12.6 L32.7 26.5 L19.66 33.9 L6.6 26.5 L6.6 12.6 Z M11.4 13.7 L19.66 9.1 L28.1 13.7 L19.66 18.2 Z M9.7 16.1 L18.4 20.9 L18.4 30.0 L9.7 25.5 Z"/></svg>
<div class="t" style="left:668.2px;top:1444.8px;font-size:28px;color:#1d262c;letter-spacing:-0.05px;">Acme Corp</div>
<div class="t" style="left:976.3px;top:1444.8px;font-size:28px;color:#5e696f;">1</div>
<div class="t" style="left:1336.0px;top:1444.8px;font-size:28px;color:#5e696f;">5</div>
<div class="t" style="left:1697.0px;top:1444.8px;font-size:28px;color:#5e696f;letter-spacing:-0.25px;">Expand to see</div>
<div class="t" style="left:1943.0px;top:1444.8px;font-size:28px;color:#5e696f;letter-spacing:-0.25px;">Expand to see</div>
<div class="t" style="left:2303.0px;top:1444.8px;font-size:28px;color:#5e696f;letter-spacing:-0.25px;">Expand to see</div>
<div class="t" style="left:2664.4px;top:1444.8px;font-size:28px;color:#1d262c;letter-spacing:1.03px;-webkit-text-stroke:1.0px #1d262c;">$24,500.00</div>
<svg class="i" style="left:507.8px;top:1541.8px;width:40px;height:40px;" viewBox="0 0 24 24" fill="none" stroke="#1d262c" stroke-width="1.7" stroke-linecap="round" stroke-linejoin="round"><path d="M9 6l6 6l-6 6"/></svg>
<svg class="i" style="left:612px;top:1542px;width:40px;height:40px" viewBox="0 0 40 40"><rect width="40" height="40" rx="8.5" fill="#4646e1"/><g stroke="#eef0ff" stroke-width="3.3" stroke-linecap="round"><path d="M7.2 15.9 L11.4 11.6"/><path d="M12.2 19.8 L24.6 7"/><path d="M20 20.5 L30.1 10.8"/><path d="M15.3 33.4 L33.6 15.9"/><path d="M10.7 29.5 L15.3 25.2"/><path d="M30.9 26.4 L33.6 24"/></g><g fill="#eef0ff"><circle cx="16.1" cy="6.6" r="1.7"/><circle cx="6.8" cy="24.4" r="1.7"/><circle cx="24.3" cy="33" r="1.7"/></g></svg>
<div class="t" style="left:667.5px;top:1548.8px;font-size:28px;color:#1d262c;letter-spacing:0.13px;">FeatherDev</div>
<div class="t" style="left:976.3px;top:1548.8px;font-size:28px;color:#5e696f;">4</div>
<div class="t" style="left:1336.0px;top:1548.8px;font-size:28px;color:#5e696f;">2</div>
<div class="t" style="left:1697.0px;top:1548.8px;font-size:28px;color:#5e696f;letter-spacing:-0.25px;">Expand to see</div>
<div class="t" style="left:1943.0px;top:1548.8px;font-size:28px;color:#5e696f;letter-spacing:-0.25px;">Expand to see</div>
<div class="t" style="left:2303.0px;top:1548.8px;font-size:28px;color:#5e696f;letter-spacing:-0.25px;">Expand to see</div>
<div class="t" style="left:2664.4px;top:1548.8px;font-size:28px;color:#1d262c;letter-spacing:1.05px;-webkit-text-stroke:1.0px #1d262c;">$8,500.00</div>
<div class="r" style="left:3200px;top:0px;width:4px;height:1802px;background:#fbfbfc;"></div>
<div class="r" style="left:440px;top:226px;width:2760px;height:2px;background:#eceef0;"></div>
</body></html>
